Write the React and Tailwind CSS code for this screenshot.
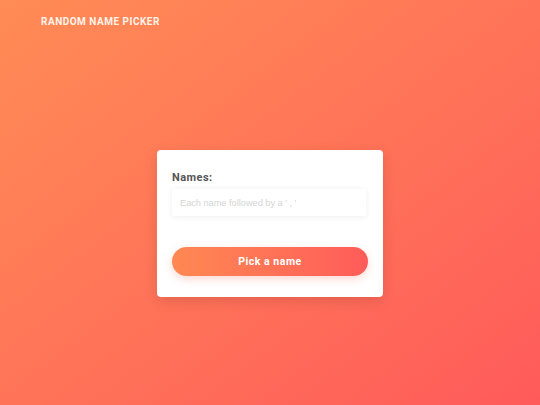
import React from "react";

export default function App() {
  return (
    <div className="w-[540px] h-[405px] bg-gradient-to-br from-[#ff8b55] to-[#ff5a5a] font-['Roboto',sans-serif] flex flex-col">
      <header className="px-[41px] pt-[16px]">
        <h1 className="text-[10px] font-bold tracking-[0.05em] text-[#fff3ea] leading-[12px]">
          RANDOM NAME PICKER
        </h1>
      </header>

      <div className="flex justify-center pt-[122px]">
        <div className="w-[226px] h-[147px] bg-white rounded-[4px] shadow-[0_4px_14px_rgba(0,0,0,0.12)] px-[15px] pt-[21px]">
          <label className="block text-[11px] font-bold text-[#555] tracking-[0.04em] leading-[13px]">
            Names:
          </label>
          <input
            className="mt-[5px] w-[194px] h-[27px] rounded-[2px] bg-white shadow-[0_1px_6px_rgba(0,0,0,0.07)] px-[8px] text-[9.2px] text-[#888] placeholder:text-[#d4d4d4] outline-none font-['Liberation_Sans',sans-serif]"
            placeholder="Each name followed by a ' , '"
          />
          <button className="mt-[31px] w-[196px] h-[29px] rounded-full bg-gradient-to-r from-[#ff8853] to-[#ff5b59] text-white text-[10.5px] font-bold tracking-[0.05em] shadow-[0_3px_8px_rgba(255,100,80,0.25)]">
            Pick a name
          </button>
        </div>
      </div>
    </div>
  );
}
